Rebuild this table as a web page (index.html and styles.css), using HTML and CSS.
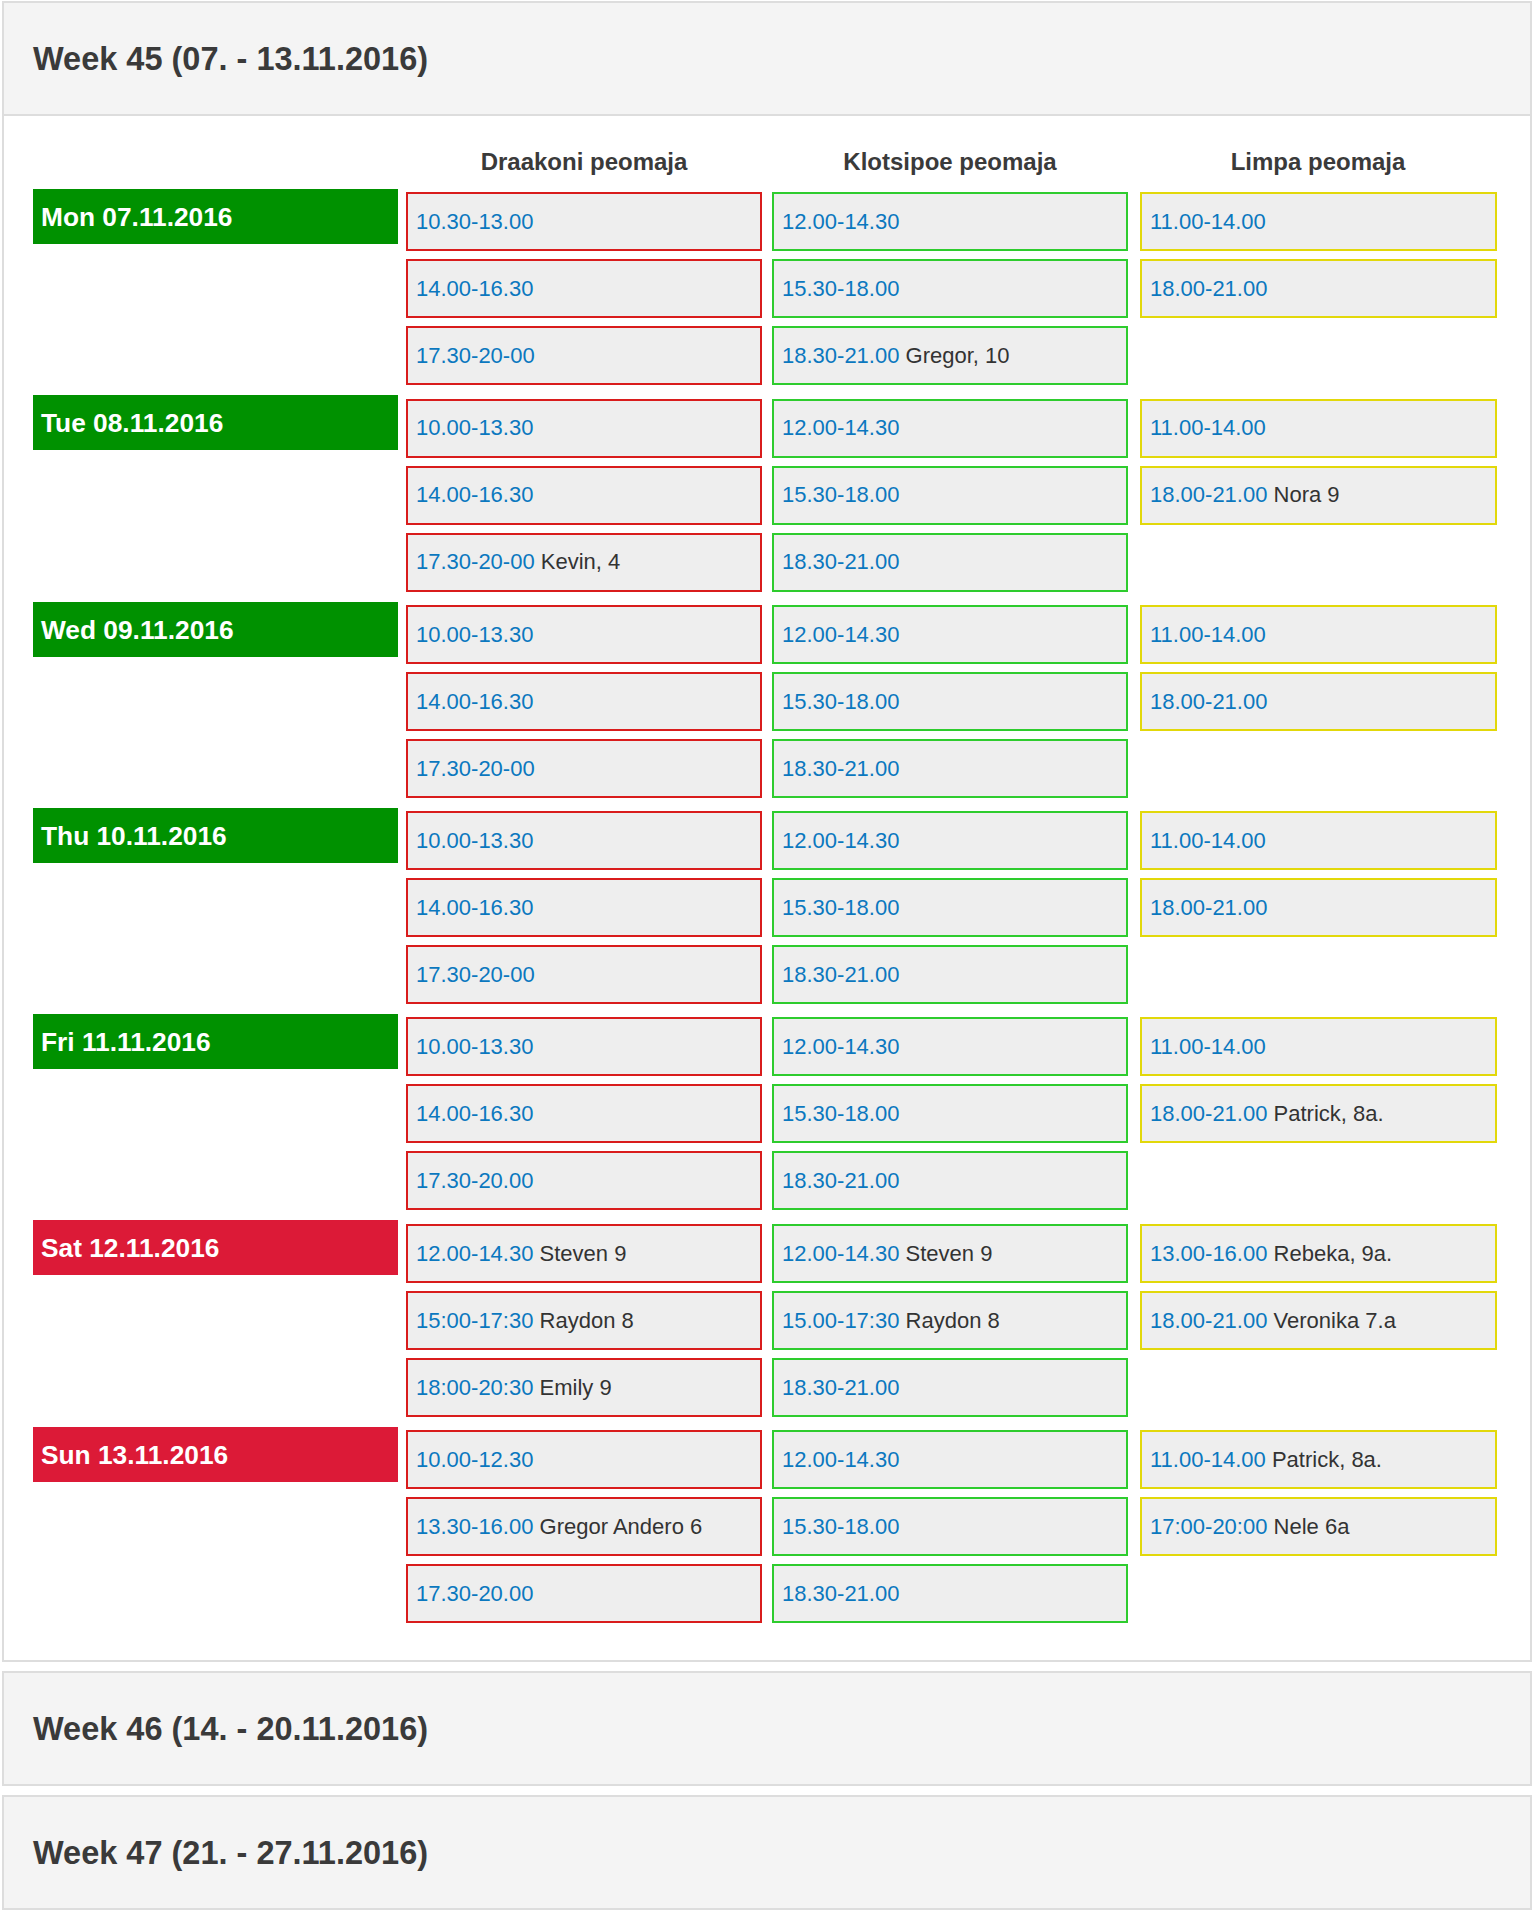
FILE: index.html
```html
<!DOCTYPE html>
<html>
<head>
<meta charset="utf-8">
<title>Peomajad</title>
<link rel="stylesheet" href="styles.css">
</head>
<body>
<div class="wrap">
  <div class="panel">
    <div class="panel-heading open"><h3 class="panel-title">Week 45 (07. - 13.11.2016)</h3></div>
    <div class="panel-body">
      <div class="grid head-row">
        <div></div>
        <div class="col-title">Draakoni peomaja</div>
        <div class="col-title">Klotsipoe peomaja</div>
        <div class="col-title">Limpa peomaja</div>
      </div>

      <div class="grid day-row">
        <div class="day work">Mon 07.11.2016</div>
        <div class="slots">
          <div class="slot red"><a>10.30-13.00</a></div>
          <div class="slot red"><a>14.00-16.30</a></div>
          <div class="slot red"><a>17.30-20-00</a></div>
        </div>
        <div class="slots">
          <div class="slot green"><a>12.00-14.30</a></div>
          <div class="slot green"><a>15.30-18.00</a></div>
          <div class="slot green"><a>18.30-21.00</a> Gregor, 10</div>
        </div>
        <div class="slots">
          <div class="slot yellow"><a>11.00-14.00</a></div>
          <div class="slot yellow"><a>18.00-21.00</a></div>
        </div>
      </div>

      <div class="grid day-row">
        <div class="day work">Tue 08.11.2016</div>
        <div class="slots">
          <div class="slot red"><a>10.00-13.30</a></div>
          <div class="slot red"><a>14.00-16.30</a></div>
          <div class="slot red"><a>17.30-20-00</a> Kevin, 4</div>
        </div>
        <div class="slots">
          <div class="slot green"><a>12.00-14.30</a></div>
          <div class="slot green"><a>15.30-18.00</a></div>
          <div class="slot green"><a>18.30-21.00</a></div>
        </div>
        <div class="slots">
          <div class="slot yellow"><a>11.00-14.00</a></div>
          <div class="slot yellow"><a>18.00-21.00</a> Nora 9</div>
        </div>
      </div>

      <div class="grid day-row">
        <div class="day work">Wed 09.11.2016</div>
        <div class="slots">
          <div class="slot red"><a>10.00-13.30</a></div>
          <div class="slot red"><a>14.00-16.30</a></div>
          <div class="slot red"><a>17.30-20-00</a></div>
        </div>
        <div class="slots">
          <div class="slot green"><a>12.00-14.30</a></div>
          <div class="slot green"><a>15.30-18.00</a></div>
          <div class="slot green"><a>18.30-21.00</a></div>
        </div>
        <div class="slots">
          <div class="slot yellow"><a>11.00-14.00</a></div>
          <div class="slot yellow"><a>18.00-21.00</a></div>
        </div>
      </div>

      <div class="grid day-row">
        <div class="day work">Thu 10.11.2016</div>
        <div class="slots">
          <div class="slot red"><a>10.00-13.30</a></div>
          <div class="slot red"><a>14.00-16.30</a></div>
          <div class="slot red"><a>17.30-20-00</a></div>
        </div>
        <div class="slots">
          <div class="slot green"><a>12.00-14.30</a></div>
          <div class="slot green"><a>15.30-18.00</a></div>
          <div class="slot green"><a>18.30-21.00</a></div>
        </div>
        <div class="slots">
          <div class="slot yellow"><a>11.00-14.00</a></div>
          <div class="slot yellow"><a>18.00-21.00</a></div>
        </div>
      </div>

      <div class="grid day-row">
        <div class="day work">Fri 11.11.2016</div>
        <div class="slots">
          <div class="slot red"><a>10.00-13.30</a></div>
          <div class="slot red"><a>14.00-16.30</a></div>
          <div class="slot red"><a>17.30-20.00</a></div>
        </div>
        <div class="slots">
          <div class="slot green"><a>12.00-14.30</a></div>
          <div class="slot green"><a>15.30-18.00</a></div>
          <div class="slot green"><a>18.30-21.00</a></div>
        </div>
        <div class="slots">
          <div class="slot yellow"><a>11.00-14.00</a></div>
          <div class="slot yellow"><a>18.00-21.00</a> Patrick, 8a.</div>
        </div>
      </div>

      <div class="grid day-row">
        <div class="day weekend">Sat 12.11.2016</div>
        <div class="slots">
          <div class="slot red"><a>12.00-14.30</a> Steven 9</div>
          <div class="slot red"><a>15:00-17:30</a> Raydon 8</div>
          <div class="slot red"><a>18:00-20:30</a> Emily 9</div>
        </div>
        <div class="slots">
          <div class="slot green"><a>12.00-14.30</a> Steven 9</div>
          <div class="slot green"><a>15.00-17:30</a> Raydon 8</div>
          <div class="slot green"><a>18.30-21.00</a></div>
        </div>
        <div class="slots">
          <div class="slot yellow"><a>13.00-16.00</a> Rebeka, 9a.</div>
          <div class="slot yellow"><a>18.00-21.00</a> Veronika 7.a</div>
        </div>
      </div>

      <div class="grid day-row">
        <div class="day weekend">Sun 13.11.2016</div>
        <div class="slots">
          <div class="slot red"><a>10.00-12.30</a></div>
          <div class="slot red"><a>13.30-16.00</a> Gregor Andero 6</div>
          <div class="slot red"><a>17.30-20.00</a></div>
        </div>
        <div class="slots">
          <div class="slot green"><a>12.00-14.30</a></div>
          <div class="slot green"><a>15.30-18.00</a></div>
          <div class="slot green"><a>18.30-21.00</a></div>
        </div>
        <div class="slots">
          <div class="slot yellow"><a>11.00-14.00</a> Patrick, 8a.</div>
          <div class="slot yellow"><a>17:00-20:00</a> Nele 6a</div>
        </div>
      </div>
    </div>
  </div>

  <div class="panel">
    <div class="panel-heading"><h3 class="panel-title">Week 46 (14. - 20.11.2016)</h3></div>
  </div>

  <div class="panel">
    <div class="panel-heading"><h3 class="panel-title">Week 47 (21. - 27.11.2016)</h3></div>
  </div>
</div>
</body>
</html>
```

FILE: styles.css
```css
html, body {
  margin: 0;
  padding: 0;
  background: #ffffff;
}

body {
  font-family: "Liberation Sans", Arial, Helvetica, sans-serif;
  color: #333333;
}

.wrap {
  padding: 1px 4px 0 2px;
}

.panel {
  border: 2px solid #dddddd;
  background: #ffffff;
  margin-bottom: 9px;
}

.panel-heading {
  background: #f4f4f4;
  padding: 38px 29px 37px;
}

.panel-heading.open {
  border-bottom: 2px solid #dddddd;
}

.panel-title {
  margin: 0;
  font-size: 32.5px;
  line-height: 36px;
  font-weight: bold;
  color: #3a3a3a;
}

.panel-body {
  padding: 33px 33px 27px 29px;
}

.grid {
  display: grid;
  grid-template-columns: 373px 366px 368px 357px;
}

.head-row {
  margin-bottom: 13.6px;
}

.col-title {
  width: 356px;
  text-align: center;
  font-size: 24px;
  line-height: 26.4px;
  font-weight: bold;
  color: #3a3a3a;
}

.day-row {
  margin-bottom: 10px;
}

.day {
  width: 365px;
  height: 55px;
  box-sizing: border-box;
  padding: 1px 0 0 8px;
  font-size: 26.3px;
  line-height: 54px;
  font-weight: bold;
  color: #ffffff;
}

.day.work {
  background: #009100;
}

.day.weekend {
  background: #dc1a37;
}

.slots {
  padding-top: 3.3px;
  display: flex;
  flex-direction: column;
  gap: 8px;
}

.slot {
  width: 356px;
  height: 59px;
  box-sizing: border-box;
  display: flex;
  align-items: center;
  padding-left: 8px;
  background: #eeeeee;
  border: 2px solid #cccccc;
  font-size: 22px;
  line-height: 31.4px;
  color: #333333;
  white-space: pre;
}

.slot a {
  color: #0b78bf;
  text-decoration: none;
}

.slot.red {
  border-color: #d91c1c;
}

.slot.green {
  border-color: #2ecc2e;
}

.slot.yellow {
  width: 357px;
  border-color: #e2d80a;
}
```
